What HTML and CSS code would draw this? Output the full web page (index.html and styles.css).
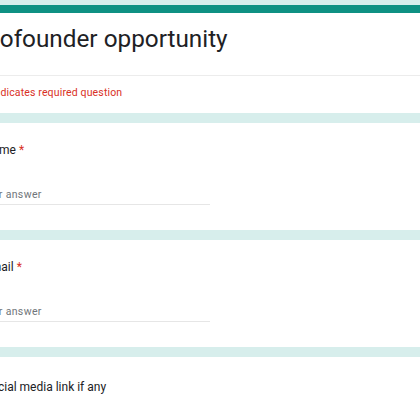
FILE: index.html
```html
<!DOCTYPE html>
<html lang="en">
<head>
<meta charset="utf-8">
<title>Cofounder opportunity</title>
<link rel="stylesheet" href="styles.css">
</head>
<body>
<div class="form">
  <div class="card header-card">
    <div class="title-block">
      <h1 class="form-title">Cofounder opportunity</h1>
    </div>
    <div class="required-note">* Indicates required question</div>
  </div>

  <div class="card question">
    <div class="q-label">Name <span class="req">*</span></div>
    <div class="answer"><span class="placeholder">Your answer</span></div>
  </div>

  <div class="card question">
    <div class="q-label">Email <span class="req">*</span></div>
    <div class="answer"><span class="placeholder">Your answer</span></div>
  </div>

  <div class="card question last">
    <div class="q-label">Social media link if any</div>
    <div class="answer"><span class="placeholder">Your answer</span></div>
  </div>
</div>
</body>
</html>
```

FILE: styles.css
```css
html, body {
  margin: 0;
  padding: 0;
  overflow: hidden;
  background: #d7eeec;
  font-family: Roboto, "Liberation Sans", Arial, sans-serif;
  color: #202124;
}

.form {
  display: flex;
  flex-direction: column;
  gap: 10px;
  margin-top: 5px;
  margin-left: -40px;
  width: 640px;
}

.card {
  background: #ffffff;
  padding-left: 24px;
}

.header-card {
  border-top: 8px solid #0f9183;
  padding-left: 0;
}

.title-block {
  padding: 10px 0 20px 24px;
  border-bottom: 1px solid #ececec;
}

.form-title {
  margin: 0;
  font-size: 24.3px;
  line-height: 32px;
  font-weight: 400;
  color: #202124;
}

.required-note {
  padding: 9px 0 12px 24px;
  font-size: 10.5px;
  line-height: 16px;
  letter-spacing: 0.15px;
  color: #d93025;
}

.question {
  padding-top: 18px;
  padding-bottom: 25px;
}

.question.last {
  padding-top: 21px;
}

.q-label {
  font-size: 12px;
  line-height: 18px;
  color: #202124;
}

.req {
  color: #d93025;
}

.answer {
  margin-top: 25px;
  width: 226px;
  height: 20px;
  border-bottom: 1px solid #e6e6e6;
  display: flex;
  align-items: center;
}

.placeholder {
  margin-left: -4px;
  font-size: 10.5px;
  letter-spacing: 0.35px;
  color: #70757a;
}
```
